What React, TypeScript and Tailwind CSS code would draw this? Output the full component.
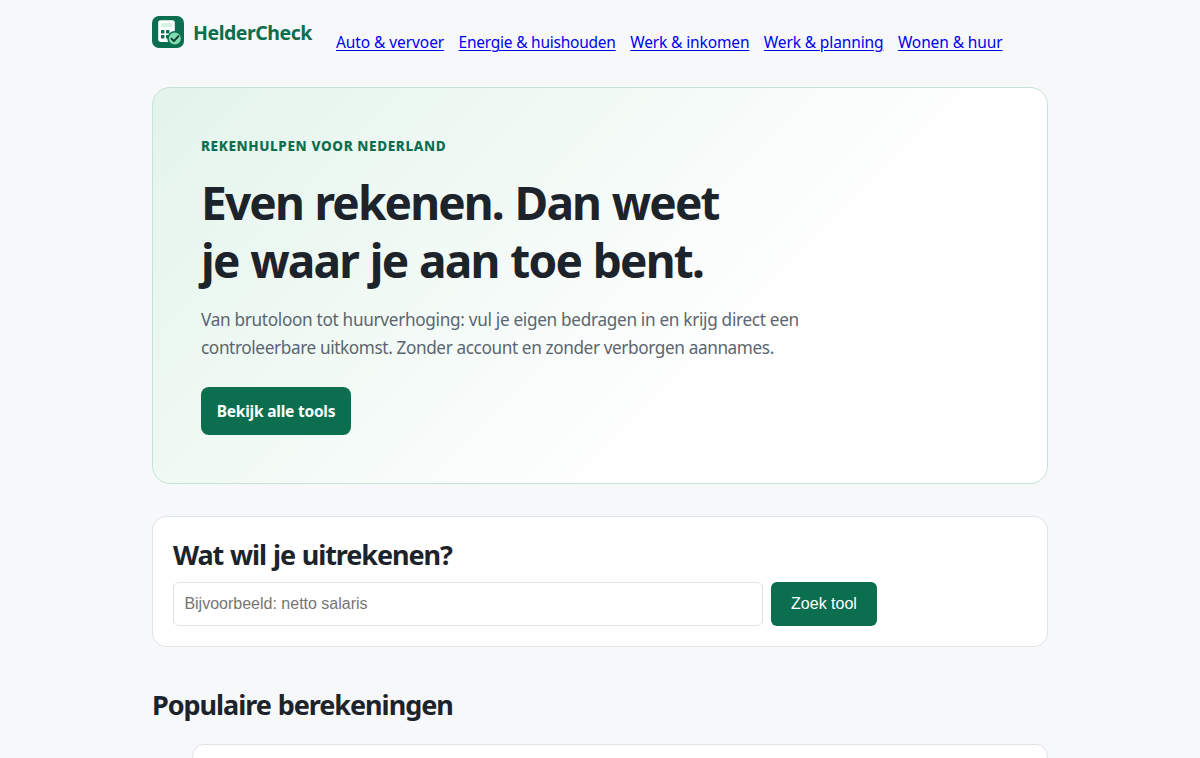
const links = [
  { label: 'Auto & vervoer', cls: 'tracking-[-0.08px] w-[108px]' },
  { label: 'Energie & huishouden', cls: 'tracking-[-0.24px] w-[157px]' },
  { label: 'Werk & inkomen', cls: 'tracking-[-0.13px] w-[119px]' },
  { label: 'Werk & planning', cls: 'tracking-[-0.12px] w-[119.5px]' },
  { label: 'Wonen & huur', cls: 'tracking-[-0.11px] w-[104.5px]' },
];

function Logo() {
  return (
    <svg width="32" height="32" viewBox="0 0 32 32" aria-hidden="true">
      <rect width="32" height="32" rx="7" fill="#0b6e4f" />
      <rect x="6.2" y="4.2" width="16.6" height="21.8" rx="2.4" fill="#fff" />
      <rect x="9" y="7" width="11" height="4.2" rx="1" fill="#d5f2e3" />
      <rect x="9" y="14" width="3.4" height="3.4" rx="0.6" fill="#0b6e4f" />
      <rect x="14" y="14" width="3.4" height="3.4" rx="0.6" fill="#0b6e4f" />
      <rect x="9" y="19" width="3.4" height="3.4" rx="0.6" fill="#0b6e4f" />
      <rect x="14" y="19" width="3.4" height="3.4" rx="0.6" fill="#0b6e4f" />
      <circle cx="22.8" cy="22.5" r="6.8" fill="#7fdcae" stroke="#0b6e4f" strokeWidth="1.5" />
      <path d="M19.4 22.7l2.5 2.5 4.6-5.1" fill="none" stroke="#123b30" strokeWidth="1.9" strokeLinecap="round" strokeLinejoin="round" />
    </svg>
  );
}

export default function App() {
  return (
    <div className="h-[758px] overflow-hidden bg-[#f7f8fa] font-['Noto_Sans','Open_Sans',sans-serif] text-[#1c232b]">
      <div className="mx-auto w-[896px]">
        <header className="flex h-[87px] items-start pt-4">
          <a href="#" className="flex h-8 w-40 items-start gap-[9px] text-[19.5px] font-bold tracking-[-0.46px] whitespace-nowrap text-[#0b6e4f]">
            <Logo />
            <span className="pt-px leading-8">HelderCheck</span>
          </a>
          <nav className="ml-6 flex gap-[14.6px] pt-[14px] text-[15.5px] leading-6 text-[#0000ee]">
            {links.map(({ label, cls }) => (
              <a key={label} href="#" className={`whitespace-nowrap underline decoration-1 underline-offset-2 ${cls}`}>
                {label}
              </a>
            ))}
          </nav>
        </header>

        <main>
          <section className="h-[397px] rounded-[18px] border border-[#c5e4d5] bg-[linear-gradient(135deg,#e3f4eb_0%,#ffffff_68%)] px-12 pt-[47px]">
            <p className="text-[13.5px] leading-[22px] font-extrabold tracking-[0.62px] text-[#0b6e4f]">REKENHULPEN VOOR NEDERLAND</p>
            <h1 className="mt-4 text-[46px] leading-[58px] font-bold whitespace-nowrap">
              <span className="block tracking-[-1.87px] [word-spacing:1.6px]">Even rekenen. Dan weet</span>
              <span className="block tracking-[-1.82px] [word-spacing:1.6px]">je waar je aan toe bent.</span>
            </h1>
            <p className="mt-[17px] text-[17.2px] leading-7 whitespace-nowrap text-[#5b6570]">
              <span className="block tracking-[-0.31px]">Van brutoloon tot huurverhoging: vul je eigen bedragen in en krijg direct een</span>
              <span className="block tracking-[-0.385px]">controleerbare uitkomst. Zonder account en zonder verborgen aannames.</span>
            </p>
            <a href="#" className="mt-[25px] flex h-12 w-[150px] items-center justify-center rounded-lg bg-[#0b6e4f] pt-0.5 text-[15.5px] font-bold tracking-[-0.22px] whitespace-nowrap text-white">
              Bekijk alle tools
            </a>
          </section>

          <section className="mt-8 h-[131px] rounded-[14px] border border-[#dfe2e7] bg-white px-5 pt-5">
            <h2 className="text-[27px] leading-[36px] font-bold tracking-[-1.1px] [word-spacing:1px]">Wat wil je uitrekenen?</h2>
            <form className="mt-[9px] flex gap-2 font-['Liberation_Sans',sans-serif] text-[16px]" onSubmit={(e) => e.preventDefault()}>
              <input
                type="search"
                placeholder="Bijvoorbeeld: netto salaris"
                className="h-11 w-[590px] rounded-md border border-[#dfe2e7] bg-white px-[10.4px] placeholder:text-[#757575]"
              />
              <button className="h-11 w-[106px] rounded-md bg-[#0b6e4f] text-white">Zoek tool</button>
            </form>
          </section>

          <h2 className="mt-10 text-[27px] leading-[36px] font-bold tracking-[-1.05px] [word-spacing:1px]">Populaire berekeningen</h2>
          <ul className="mt-[21px] pl-10">
            <li className="h-24 rounded-[12px] border border-[#dfe2e7] bg-white" />
          </ul>
        </main>
      </div>
    </div>
  );
}
